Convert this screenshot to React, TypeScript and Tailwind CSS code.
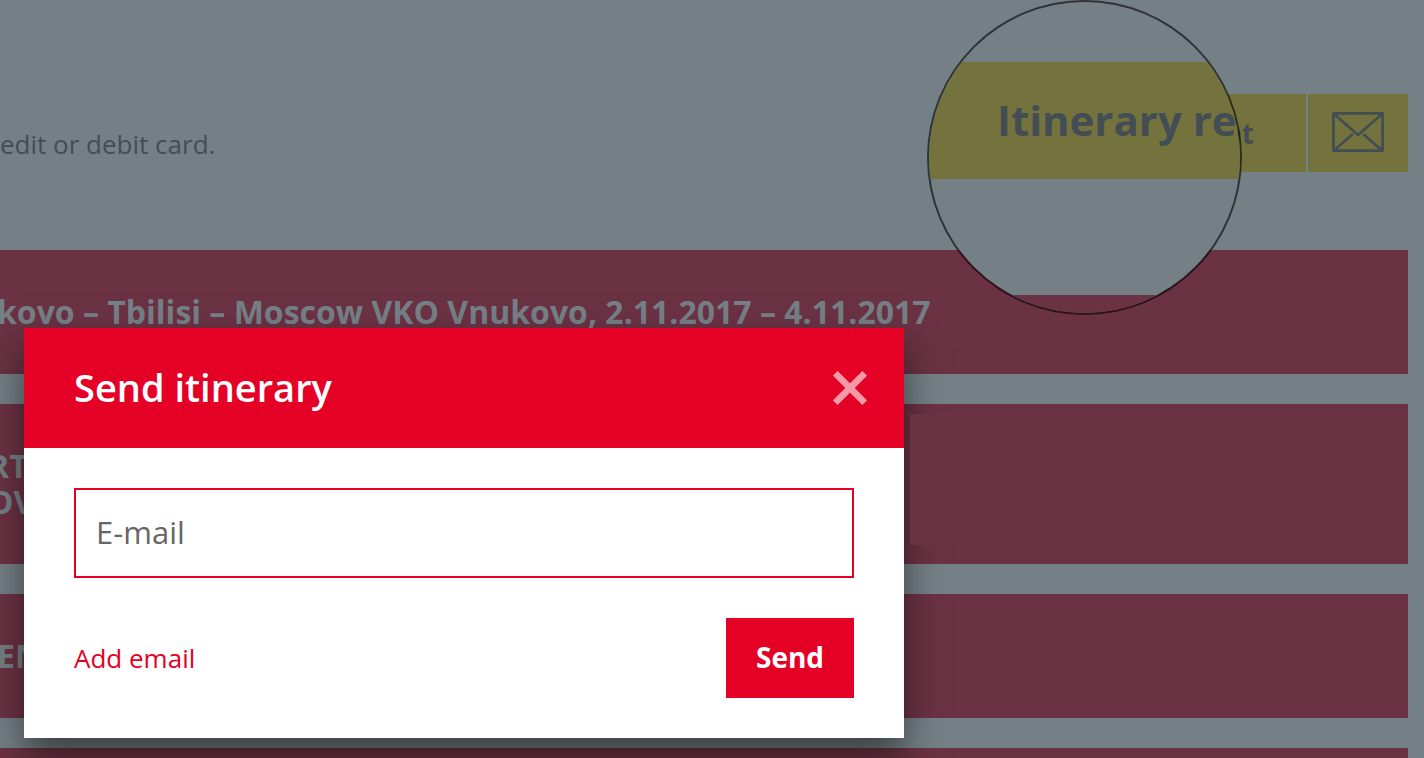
import React from "react";

function MailIcon() {
  return (
    <svg
      width="52"
      height="40"
      viewBox="0 0 52 40"
      fill="none"
      stroke="currentColor"
      strokeWidth="2.7"
      strokeLinecap="round"
      strokeLinejoin="round"
      aria-hidden="true"
    >
      <rect x="1.4" y="1.4" width="49.2" height="37.2" />
      <path d="M2 2 26 23 50 2" />
      <path d="M2.5 38 20 22.8M49.5 38 32 22.8" />
    </svg>
  );
}

function CloseIcon() {
  return (
    <svg
      width="34"
      height="34"
      viewBox="0 0 34 34"
      fill="none"
      stroke="currentColor"
      strokeWidth="6.6"
      aria-hidden="true"
    >
      <path d="M2.3 2.3 31.7 31.7M31.7 2.3 2.3 31.7" />
    </svg>
  );
}

function Magnifier() {
  return (
    <div
      aria-hidden="true"
      className="absolute top-0 right-[182px] size-[315px] overflow-hidden rounded-full border-2 border-black/60 bg-[#758086] bg-clip-padding"
    >
      <div className="mt-[60px] flex h-[117px] items-center bg-[#74723d] pb-0.5 pl-[68px] text-[42px] font-bold whitespace-nowrap">
        Itinerary re
      </div>
      <div className="mt-[116px] h-5 bg-[#6b3244]" />
    </div>
  );
}

function SendDialog() {
  return (
    <form
      role="dialog"
      aria-labelledby="dialog-title"
      onSubmit={(e) => e.preventDefault()}
      className="absolute top-[328px] left-6 z-10 w-[880px] bg-white shadow-[0_20px_36px_rgba(0,0,0,0.5)]"
    >
      <header className="flex h-[120px] items-center justify-between bg-[#e50025] pr-[37px] pl-[50px]">
        <h2
          id="dialog-title"
          className="pb-0.5 text-[38px] font-semibold text-white"
        >
          Send itinerary
        </h2>
        <button type="button" aria-label="Close" className="text-[#f799a8]">
          <CloseIcon />
        </button>
      </header>
      <div className="px-[50px] py-10">
        <input
          type="email"
          aria-label="E-mail"
          placeholder="E-mail"
          className="block h-[90px] w-full border-2 border-[#e50025] px-5 pb-0.5 text-[31px] text-[#666] outline-none placeholder:text-[#666] placeholder:opacity-100"
        />
        <div className="mt-10 flex items-center justify-between">
          <button type="button" className="text-[26px] text-[#e50025]">
            Add email
          </button>
          <button
            type="submit"
            className="h-20 w-32 bg-[#e50025] pb-0.5 text-[28px] font-bold text-white"
          >
            Send
          </button>
        </div>
      </div>
    </form>
  );
}

export default function App() {
  return (
    <div className="relative flex min-h-screen flex-col overflow-hidden bg-[#758086] pr-4 font-['Open_Sans','Noto_Sans',sans-serif] text-[#434e54]">
      <div className="mt-[94px] flex h-[78px] shrink-0 justify-between">
        <p className="pt-8 text-[26px] leading-9">edit or debit card.</p>
        <div className="flex gap-0.5">
          <button
            type="button"
            className="bg-[#74723d] px-[52px] text-[28px] font-bold"
          >
            Itinerary receipt
          </button>
          <button
            type="button"
            aria-label="Send by e-mail"
            className="flex w-[100px] items-center justify-center bg-[#74723d] pb-0.5"
          >
            <MailIcon />
          </button>
        </div>
      </div>

      <main className="mt-[78px] flex flex-1 flex-col gap-[30px] text-[32px] leading-9 font-bold text-[#758086]">
        <section className="flex h-[124px] items-center bg-[#6b3244]">
          <h1 className="-ml-[3px] whitespace-nowrap">
            kovo – Tbilisi – Moscow VKO Vnukovo, 2.11.2017 – 4.11.2017
          </h1>
        </section>
        <section className="flex h-40 items-center justify-between bg-[#6b3244]">
          <h2 className="-ml-3">
            RT
            <br />
            OV
          </h2>
          <div className="relative z-20 mb-[9px] h-[131px] w-[498px] bg-[#6b3244]" />
        </section>
        <section className="flex h-[124px] items-center bg-[#6b3244]">
          <h2 className="-ml-[3px]">EN</h2>
        </section>
        <section className="min-h-[10px] flex-1 bg-[#6b3244]" />
      </main>

      <Magnifier />
      <SendDialog />
    </div>
  );
}
